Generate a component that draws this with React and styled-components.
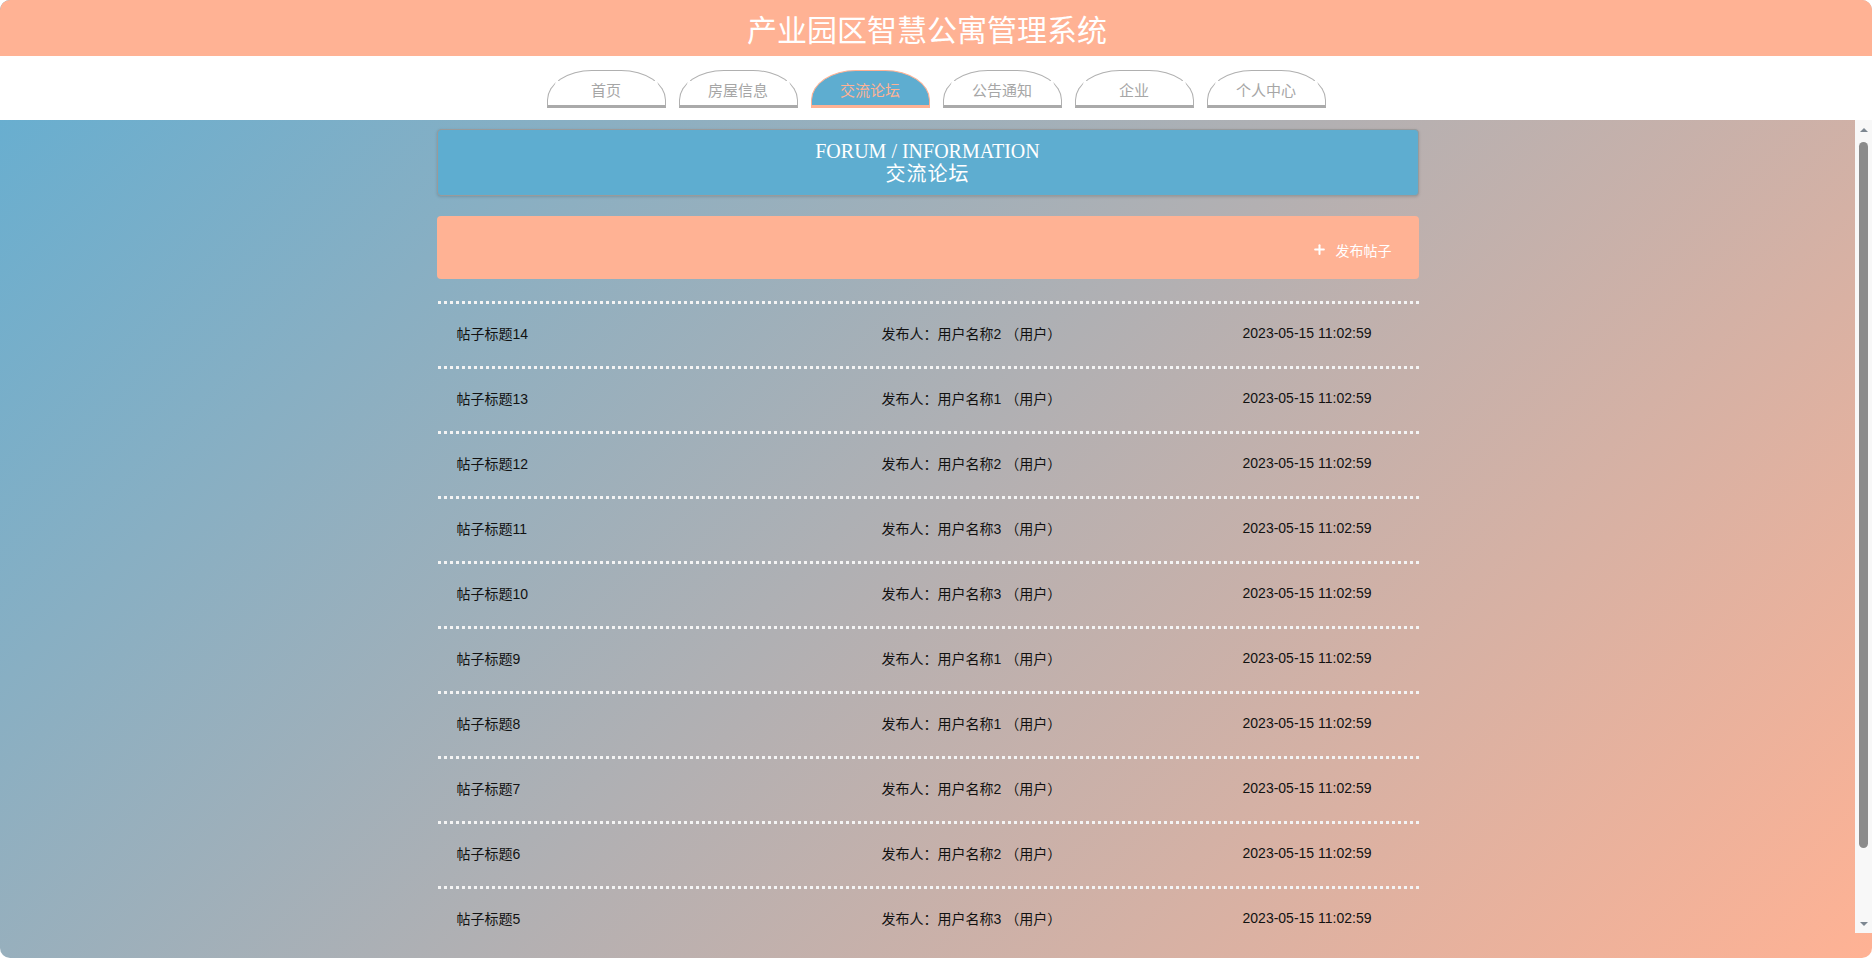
import styled, { createGlobalStyle } from "styled-components";
import { Plus } from "lucide-react";

const GlobalStyle = createGlobalStyle`
  html, body {
    margin: 0;
    padding: 0;
    height: 100%;
    background: #fff;
  }
  body {
    font-family: "Liberation Sans", "Noto Sans CJK SC", sans-serif;
  }
  * {
    box-sizing: border-box;
  }
`;

const tabs = ["首页", "房屋信息", "交流论坛", "公告通知", "企业", "个人中心"];

const posts = [
  { id: 14, user: 2 },
  { id: 13, user: 1 },
  { id: 12, user: 2 },
  { id: 11, user: 3 },
  { id: 10, user: 3 },
  { id: 9, user: 1 },
  { id: 8, user: 1 },
  { id: 7, user: 2 },
  { id: 6, user: 2 },
  { id: 5, user: 3 },
];

const App = () => {
  return (
    <>
      <GlobalStyle />
      <Page>
        <Header>产业园区智慧公寓管理系统</Header>
        <Nav>
          {tabs.map((t) => (
            <Tab key={t} $active={t === "交流论坛"}>
              {t}
            </Tab>
          ))}
        </Nav>
        <Main>
          <Scroll>
            <Column>
              <Banner>
                <div>FORUM / INFORMATION</div>
                <div>交流论坛</div>
              </Banner>
              <ActionBar>
                <AddButton>
                  <Plus size={15} strokeWidth={3.2} />
                  发布帖子
                </AddButton>
              </ActionBar>
              <List>
                {posts.map((p) => (
                  <Row key={p.id}>
                    <span>帖子标题{p.id}</span>
                    <span>发布人：用户名称{p.user} （用户）</span>
                    <span>2023-05-15 11:02:59</span>
                  </Row>
                ))}
              </List>
            </Column>
          </Scroll>
          <Rail>
            <Arrow $dir="up" />
            <Track>
              <Thumb />
            </Track>
            <Arrow $dir="down" />
          </Rail>
        </Main>
      </Page>
    </>
  );
};

export default App;

const Page = styled.div`
  height: 100vh;
  display: flex;
  flex-direction: column;
  border-radius: 10px;
  overflow: hidden;
  background: linear-gradient(135deg, #62aed2, #ffb294);
`;

const Header = styled.header`
  height: 56px;
  flex-shrink: 0;
  background: #ffb294;
  color: #fff;
  font-family: "Noto Sans CJK SC", sans-serif;
  font-size: 30px;
  line-height: 56px;
  text-align: center;
  padding-right: 18px;
`;

const Nav = styled.nav`
  height: 64px;
  flex-shrink: 0;
  background: #fff;
  display: flex;
  justify-content: center;
  align-items: flex-start;
  gap: 13px;
  padding-top: 14px;
`;

const Tab = styled.div`
  width: 119px;
  height: 38px;
  display: flex;
  align-items: center;
  justify-content: center;
  padding-top: 2px;
  border: 1px solid ${(p) => (p.$active ? "#ffb294" : "#b0b0b0")};
  border-bottom: 3px solid ${(p) => (p.$active ? "#ffb294" : "#aaaaaa")};
  border-radius: 45px 45px 0 0 / 30px 30px 0 0;
  background: ${(p) => (p.$active ? "#5eadd0" : "#fff")};
  color: ${(p) => (p.$active ? "#ffb294" : "#a6a6a6")};
  font-family: "Noto Sans CJK SC", sans-serif;
  font-size: 15px;
  cursor: pointer;
`;

const Main = styled.main`
  flex: 1;
  min-height: 0;
  display: flex;
  margin-bottom: 25px;
`;

const Scroll = styled.div`
  flex: 1;
  min-width: 0;
  overflow-y: auto;
  scrollbar-width: none;

  &::-webkit-scrollbar {
    display: none;
  }
`;

const Rail = styled.div`
  width: 17px;
  flex-shrink: 0;
  background: #f8f8f8;
  display: flex;
  flex-direction: column;
`;

const Arrow = styled.div`
  height: 17px;
  flex-shrink: 0;
  display: flex;
  align-items: center;
  justify-content: center;

  &::before {
    content: "";
    width: 0;
    height: 0;
    border-left: 4px solid transparent;
    border-right: 4px solid transparent;
    ${(p) =>
      p.$dir === "up"
        ? "border-bottom: 4px solid #7d8791; margin-top: 2px;"
        : "border-top: 4px solid #7d8791; margin-top: -2px;"}
  }
`;

const Track = styled.div`
  flex: 1;
  padding: 5px 4px 0;
`;

const Thumb = styled.div`
  height: 706px;
  border-radius: 5px;
  background: #8b8b8b;
`;

const Column = styled.div`
  width: 982px;
  margin: 0 auto;
  padding: 9px 0 70px;
`;

const Banner = styled.div`
  height: 67px;
  background: #5eadd0;
  border: 1px solid #9a9a9a;
  border-radius: 4px;
  box-shadow: 0 1px 3px rgba(0, 0, 0, 0.15);
  color: #fff;
  font-family: "Liberation Serif", "Noto Sans CJK SC", serif;
  font-size: 20px;
  line-height: 23px;
  text-align: center;
  padding-top: 10px;

  div + div {
    letter-spacing: 1px;
  }
`;

const ActionBar = styled.div`
  margin-top: 20px;
  height: 63px;
  background: #ffb294;
  border-radius: 4px;
  display: flex;
  justify-content: flex-end;
  align-items: center;
  padding: 4px 27px 0 0;
`;

const AddButton = styled.div`
  display: flex;
  align-items: center;
  gap: 9px;
  color: #fff;
  font-family: "Noto Sans CJK SC", sans-serif;
  font-size: 14px;
  cursor: pointer;
`;

const List = styled.div`
  margin-top: 22px;
`;

const Row = styled.div`
  height: 65px;
  padding: 0 47px 2px 20px;
  display: grid;
  grid-template-columns: 425px 1fr auto;
  align-items: center;
  font-size: 14px;
  color: #111;
  background-image: repeating-linear-gradient(
    to right,
    #f4f4f4 0 3px,
    transparent 3px 6px
  );
  background-size: 100% 3px;
  background-repeat: no-repeat;
  background-position: 1px 0;
`;
